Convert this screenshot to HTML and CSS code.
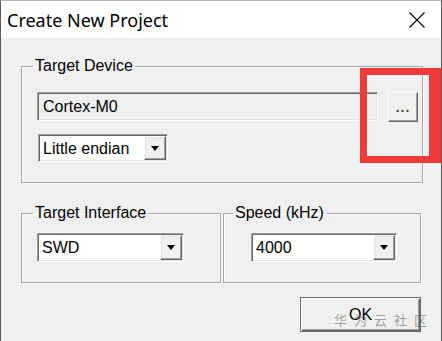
FILE: index.html
```
<html lang="en">
<head>
<title>Create New Project</title>
<link rel="stylesheet" href="styles.css">
</head>
<body>
<div class="window">
	<div class="titlebar">
		<span class="title">Create New Project</span>
		<svg class="close" width="16" height="16" viewBox="0 0 16 16">
			<path d="M0.5 0.5 L15.5 15.5 M15.5 0.5 L0.5 15.5" stroke="#000" stroke-width="1.1" fill="none"/>
		</svg>
	</div>

	<div class="dialog">
		<fieldset class="group device">
			<legend>Target Device</legend>
			<div class="device-row">
				<div class="field sunken">Cortex-M0</div>
				<button class="btn raised browse">...</button>
			</div>
			<div class="combo sunken endian">
				<span class="combo-text">Little endian</span>
				<span class="combo-btn raised"><svg width="8" height="5" viewBox="0 0 8 5"><polygon points="0,0 8,0 4,5" fill="#000"/></svg></span>
			</div>
		</fieldset>

		<div class="group-row">
			<fieldset class="group iface">
				<legend>Target Interface</legend>
				<div class="combo sunken swd">
					<span class="combo-text">SWD</span>
					<span class="combo-btn raised"><svg width="8" height="5" viewBox="0 0 8 5"><polygon points="0,0 8,0 4,5" fill="#000"/></svg></span>
				</div>
			</fieldset>
			<fieldset class="group speed">
				<legend>Speed (kHz)</legend>
				<div class="combo sunken khz">
					<span class="combo-text">4000</span>
					<span class="combo-btn raised"><svg width="8" height="5" viewBox="0 0 8 5"><polygon points="0,0 8,0 4,5" fill="#000"/></svg></span>
				</div>
			</fieldset>
		</div>

		<div class="actions">
			<button class="btn ok">OK</button>
		</div>
	</div>

	<!-- annotation drawn over the screenshot -->
	<div class="highlight"></div>
	<div class="watermark">华为云社区</div>
</div>
</body>
</html>
```

FILE: styles.css
```
body { margin:0; background:#f0f0f0; overflow:hidden; }
.window { position:relative; width:440px; height:340px; background:#f0f0f0; border-top:1px solid #b4b4b4; border-left:1px solid #5a5a5a; border-right:1px solid #5a5a5a; font-family:"Liberation Sans", Arial, sans-serif; font-size:16px; color:#000; }

.titlebar { height:37px; background:#fff; display:flex; align-items:center; justify-content:space-between; padding:0 16px 0 6px; }
.title { font-family:"Noto Sans", "Open Sans", sans-serif; font-size:18px; color:#000; }
.close { display:block; }

.dialog { display:flex; flex-direction:column; }

.group { margin:0; min-width:0; border:1px solid #a8a8a8; box-shadow:1px 1px 0 #fff, inset 1px 1px 0 #fff; padding:0; }
.group legend { font-size:16px; line-height:18px; padding:0 2px; margin-left:11px; }

.device { margin:19px 18px 0 20px; padding:17px 0 20px 0; }
.device-row { display:flex; align-items:flex-start; margin-left:15px; }

.sunken { border:1px solid; border-color:#a0a0a0 #fff #fff #a0a0a0; box-shadow:inset 1px 1px 0 #696969, inset -1px -1px 0 #e3e3e3; }
.raised { border:1px solid; border-color:#fff #696969 #696969 #fff; box-shadow:inset -1px -1px 0 #a0a0a0, inset 1px 1px 0 #e3e3e3; background:#f0f0f0; }

.field { box-sizing:border-box; width:341px; height:29px; background:#f0f0f0; padding:0 5px; line-height:27px; }
.btn { box-sizing:border-box; font-family:"Liberation Sans", Arial, sans-serif; color:#000; padding:0; }
.browse { width:30px; height:30px; margin-left:10px; font-size:14px; font-weight:bold; color:#444; letter-spacing:1px; }

.combo { box-sizing:border-box; display:flex; align-items:stretch; background:#fff; padding:1px; }
.combo-text { flex:1; padding-left:3px; line-height:25px; }
.combo-btn { box-sizing:border-box; width:22px; display:flex; align-items:center; justify-content:center; }
.combo-btn svg { display:block; }

.endian { width:130px; height:28px; margin:12px 0 0 16px; }

.group-row { display:flex; gap:2px; margin:21px 0 0 20px; }
.iface { width:200px; box-sizing:border-box; padding:11px 0 20px 0; }
.speed { width:198px; box-sizing:border-box; padding:11px 0 20px 0; }
.speed legend { margin-left:9px; }
.swd { width:147px; height:29px; margin-left:15px; }
.khz { width:146px; height:29px; margin-left:27px; }

.actions { display:flex; justify-content:flex-end; margin:14px 20px 0 0; }
.ok { width:121px; height:35px; font-size:16px; background:#f0f0f0; border:1px solid #6a6a6a; box-shadow:inset 1px 1px 0 #fff, inset -1px -1px 0 #696969, inset -2px -2px 0 #a0a0a0; }

.highlight { position:absolute; left:359px; top:67px; width:62px; height:81px; border-style:solid; border-color:#f03a3a; border-width:7px 12px 7px 7px; }
.watermark { position:absolute; left:333px; top:309px; font-family:"Noto Sans CJK SC", sans-serif; font-size:13px; letter-spacing:7px; color:rgba(90,90,90,0.55); }
```
